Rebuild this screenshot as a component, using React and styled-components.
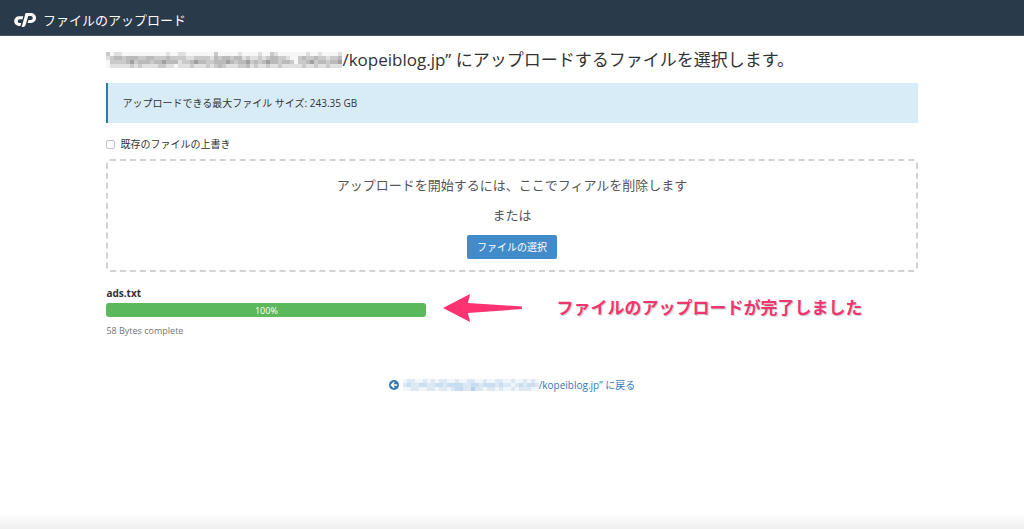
import styled, { createGlobalStyle } from 'styled-components';

const GlobalStyle = createGlobalStyle`
    * {
        box-sizing: border-box;
    }

    body {
        margin: 0;
        background: #fff;
        color: #333;
        font-family: 'Open Sans', 'Noto Sans CJK JP', sans-serif;
        font-size: 10px;
        line-height: 16px;
    }
`

const headingTones = [
    'ceddeeeeeeeeeeedeeddeeeeeeeceeeeedeeeedeecdeeeeeeedeedeeeed',
    'dcbbcbbbccbbcccbccccddccccdbcbbcbbdcddcdcbbccdeecbccbccdccb',
    'eccccbacbbbcbbabbbdccbabbccbbbabcbbacbcbabbcbbceccbacbbcbba',
    'edddddcdcddddccddedddcdddcdcbcdddccbdcddcddcdddddcddcddcddd',
];

const linkTones = [
    'eddeedededdeedeeddeedeeddeedeedede',
    'dcddccddccdccccddccdcccdcddedcdccd',
    'eeddeeddeddedccddbddeddedeededddee',
];

const greys = { a: '#a0a0a0', b: '#bababa', c: '#cacaca', d: '#e0e0e0', e: '#f7f7f7' };
const blues = { b: '#b7d3ec', c: '#c8ddf0', d: '#dce9f5', e: '#f0f6fb' };

function Mosaic({ rows, tones, cell, label }) {
    const width = rows[0].length * cell;
    const height = rows.length * cell;

    return (
        <MosaicSvg role="img" aria-label={label} width={width} height={height} viewBox={`0 0 ${width} ${height}`}>
            {rows.map((row, y) => row.split('').map((tone, x) => (
                <rect key={`${x}-${y}`} x={x * cell} y={y * cell} width={cell} height={cell} fill={tones[tone]} />
            )))}
        </MosaicSvg>
    )
}

export default function App() {
    return (
        <Page>
            <GlobalStyle />
            <Header>
                <Logo viewBox="0 0 22 14" aria-hidden="true">
                    <path d="M9.300 3.300 8.400 6.300H5.600a1.700 1.700 0 0 0 0 3.700H7.300L6.400 13H5A4.800 4.800 0 0 1 5 3.300z" />
                    <path d="M11.600 0H17a5 5 0 0 1 0 10H13.600L14.500 7H16.800a2 2 0 0 0 0-4H14.200L11.500 12.200Q11 14 9 14H7.700z" />
                </Logo>
                <HeaderTitle>ファイルのアップロード</HeaderTitle>
            </Header>
            <Content>
                <Title>
                    <Mosaic rows={headingTones} tones={greys} cell={4} label="hidden path" />
                    <span>/kopeiblog.jp” にアップロードするファイルを選択します。</span>
                </Title>
                <Notice>アップロードできる最大ファイル サイズ: 243.35 GB</Notice>
                <Option>
                    <Checkbox type="checkbox" />
                    既存のファイルの上書き
                </Option>
                <DropZone>
                    <DropText>アップロードを開始するには、ここでフィアルを削除します</DropText>
                    <DropText>または</DropText>
                    <Button type="button">ファイルの選択</Button>
                </DropZone>
                <UploadRow>
                    <Upload>
                        <FileName>ads.txt</FileName>
                        <Progress role="progressbar" aria-valuenow={100} aria-label="ads.txt">100%</Progress>
                        <Status>58 Bytes complete</Status>
                    </Upload>
                    <Callout>
                        <Arrow viewBox="0 0 80 30" aria-hidden="true">
                            <path d="M0 15 27 1 25 10 79 13.500v2.500L25 20l2 9z" />
                        </Arrow>
                        <CalloutText>ファイルのアップロードが完了しました</CalloutText>
                    </Callout>
                </UploadRow>
                <BackLink href="#back">
                    <BackIcon viewBox="0 0 10 10" aria-hidden="true">
                        <circle cx="5" cy="5" r="5" />
                        <path d="M8.200 5H3M5.200 2.300 2.500 5 5.200 7.700" />
                    </BackIcon>
                    <Mosaic rows={linkTones} tones={blues} cell={4} label="hidden path" />
                    <span>/kopeiblog.jp” に戻る</span>
                </BackLink>
            </Content>
            <BottomShade />
        </Page>
    )
}

const Page = styled.div`
    display: flex;
    flex-direction: column;
    min-height: 100vh;
`

const Header = styled.header`
    display: flex;
    align-items: center;
    gap: 7px;
    height: 36px;
    padding: 4px 14px 0;
    background: #293a4a;
    border-bottom: 1px solid #46545f;
    color: #fff;
`

const Logo = styled.svg`
    width: 22px;
    height: 14px;
    fill: #fff;
`

const HeaderTitle = styled.div`
    font-size: 13px;
    line-height: 20px;
`

const Content = styled.main`
    display: flex;
    flex-direction: column;
    width: 80%;
    padding: 12px 4px 0;
    margin: 0 auto;
`

const Title = styled.h1`
    display: flex;
    align-items: center;
    margin: 0 0 12px;
    font-size: 17px;
    font-weight: 400;
    line-height: 23px;
    white-space: nowrap;
`

const MosaicSvg = styled.svg`
    flex: none;
`

const Notice = styled.div`
    padding: 12px 14px;
    margin-bottom: 13px;
    background: #d8ecf7;
    border-left: 2px solid #2f7ba8;
`

const Option = styled.label`
    display: flex;
    align-items: center;
    gap: 5px;
    margin-bottom: 7px;
`

const Checkbox = styled.input`
    appearance: none;
    width: 9px;
    height: 9px;
    margin: 0;
    border: 1px solid #c4c4c4;
    border-radius: 2px;
    background: #fff;
`

const DropZone = styled.section`
    display: flex;
    flex-direction: column;
    align-items: center;
    padding: 14px 16px 11px;
    border: 2px dashed #d2d2d2;
    border-radius: 4px;
`

const DropText = styled.p`
    margin: 0 0 10px;
    font-size: 13px;
    line-height: 20px;
    color: #555;
`

const Button = styled.button`
    padding: 4px 10px;
    border: 0;
    border-radius: 2px;
    background: #428bca;
    color: #fff;
    font: inherit;
`

const UploadRow = styled.section`
    display: flex;
    gap: 17px;
    margin-top: 13px;
`

const Upload = styled.div`
    flex: none;
    width: 320px;
`

const FileName = styled.div`
    font-weight: 700;
`

const Progress = styled.div`
    height: 14px;
    margin: 2px 0 6px;
    border-radius: 3px;
    background: #5cb85c;
    color: #fff;
    font-size: 9px;
    line-height: 15px;
    text-align: center;
`

const Status = styled.div`
    font-size: 9px;
    color: #737373;
`

const Callout = styled.div`
    display: flex;
    align-items: center;
    gap: 33px;
    height: 46px;
`

const Arrow = styled.svg`
    width: 80px;
    height: 30px;
    fill: #fc3370;
`

const CalloutText = styled.strong`
    color: #f03670;
    font-size: 17px;
    line-height: 24px;
    white-space: nowrap;
    text-shadow: 1px 1px 1px #ccc;
`

const BackLink = styled.a`
    display: flex;
    align-items: center;
    align-self: center;
    margin-top: 38px;
    color: #337ab7;
    text-decoration: none;
`

const BackIcon = styled.svg`
    width: 10px;
    height: 10px;
    margin-right: 4px;
    fill: #337ab7;

    path {
        fill: none;
        stroke: #fff;
        stroke-width: 1.5;
    }
`

const BottomShade = styled.div`
    height: 16px;
    margin-top: auto;
    background: linear-gradient(#fff, #efefef);
`
